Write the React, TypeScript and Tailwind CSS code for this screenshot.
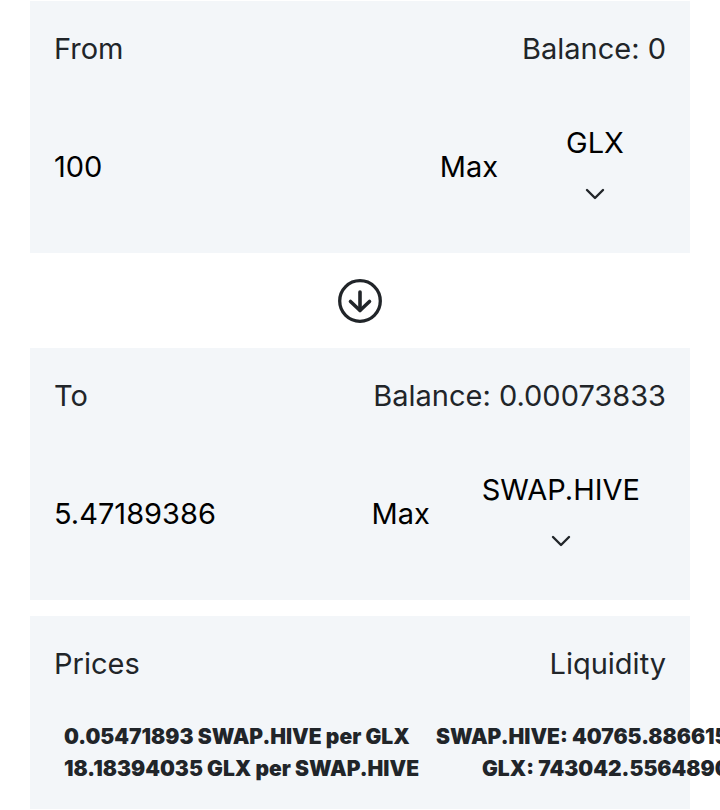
import { ReactNode } from "react";

function Chevron() {
  return (
    <svg width="20" height="12" viewBox="0 0 20 12" fill="none">
      <path d="M2 2l8 8 8-8" stroke="#212529" strokeWidth="2.4" strokeLinecap="round" strokeLinejoin="round" />
    </svg>
  );
}

function SwapArrow() {
  return (
    <svg width="48" height="48" viewBox="0 0 48 48" fill="none">
      <circle cx="24" cy="24" r="20.3" stroke="#212529" strokeWidth="3.3" />
      <path d="M24 15v18" stroke="#212529" strokeWidth="3.6" strokeLinecap="round" />
      <path d="M14.5 24.5l9.5 9 9.5-9" stroke="#212529" strokeWidth="3.6" strokeLinecap="round" strokeLinejoin="round" />
    </svg>
  );
}

type TokenPanelProps = {
  label: string;
  balance: string;
  amount: string;
  token: string;
};

function Panel({ children }: { children: ReactNode }) {
  return <div className="bg-[#f3f6f9] p-6">{children}</div>;
}

function TokenPanel({ label, balance, amount, token }: TokenPanelProps) {
  return (
    <Panel>
      <div className="flex h-12 items-center justify-between">
        <span>{label}</span>
        <span>Balance: {balance}</span>
      </div>
      <div className="mt-8 flex h-[124px] items-center">
        <div className="flex-1 text-black">{amount}</div>
        <div className="flex items-center gap-[26px]">
          <span className="text-black">Max</span>
          <div className="flex min-w-[142px] flex-col items-center px-[26px]">
            <span className="flex h-12 items-center text-black">{token}</span>
            <span className="flex h-12 items-center pt-[5px]">
              <Chevron />
            </span>
          </div>
        </div>
      </div>
    </Panel>
  );
}

export default function App() {
  return (
    <div className="h-[810px] w-[720px] overflow-hidden bg-white font-['Inter',sans-serif] text-[29px] text-[#212529]">
      <div className="px-[30px] pt-px">
        <TokenPanel label="From" balance="0" amount="100" token="GLX" />
        <div className="flex h-[95px] items-center justify-center">
          <SwapArrow />
        </div>
        <TokenPanel label="To" balance="0.00073833" amount="5.47189386" token="SWAP.HIVE" />
        <div className="mt-4">
          <Panel>
            <div className="flex h-12 items-center justify-between">
              <span>Prices</span>
              <span>Liquidity</span>
            </div>
            <div className="mt-[33px] flex whitespace-nowrap text-[21px] font-black leading-8">
              <div className="w-[382px] shrink-0 pl-[10px]">
                <div>0.05471893 SWAP.HIVE per GLX</div>
                <div>18.18394035 GLX per SWAP.HIVE</div>
              </div>
              <div className="shrink-0">
                <div>SWAP.HIVE: 40765.88661540</div>
                <div className="ml-[46px]">GLX: 743042.55648901</div>
              </div>
            </div>
          </Panel>
        </div>
      </div>
    </div>
  );
}
